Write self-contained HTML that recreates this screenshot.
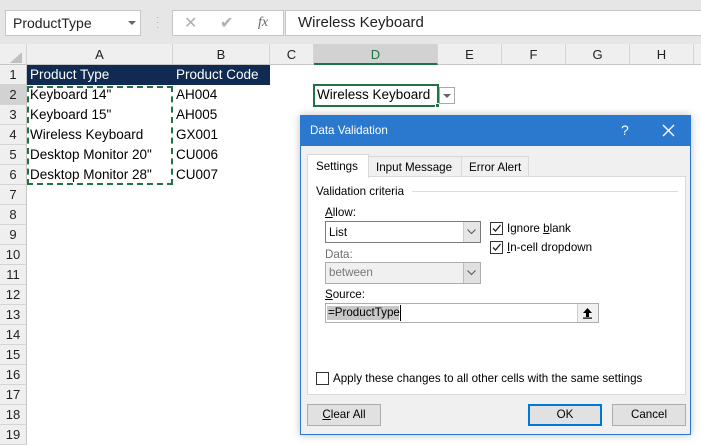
<!DOCTYPE html>
<html><head><meta charset="utf-8"><style>
*{margin:0;padding:0;box-sizing:border-box}
body{width:701px;height:443px;overflow:hidden;background:#fff;font-family:"Liberation Sans",sans-serif;position:relative}
.a{position:absolute}
.ch{position:absolute;top:44px;height:21px;background:#efefef;border-right:1px solid #d4d4d4;border-bottom:1px solid #c6c6c6;text-align:center;font-size:13px;line-height:21px;color:#222}
.rh{position:absolute;left:0;width:27px;height:20px;background:#efefef;border-bottom:1px solid #d4d4d4;border-right:1px solid #c6c6c6;text-align:center;font-size:13px;line-height:20px;color:#222}
.c{position:absolute;font-size:13.5px;line-height:20px;color:#000;white-space:nowrap}
.d{font-size:11.6px;color:#000;white-space:nowrap}
.btn{position:absolute;height:22px;background:#e1e1e1;border:1px solid #adadad;font-size:11.6px;text-align:center;line-height:20px}
.cb{position:absolute;width:13px;height:13px;border:1px solid #333;background:#fff}
</style></head><body>
<div class="a" style="left:0;top:0;width:701px;height:44px;background:#e6e6e6"></div>
<div class="a" style="left:5px;top:10px;width:136px;height:26px;background:#fff;border:1px solid #c6c6c6;font-size:14px;line-height:24px;padding-left:7px;color:#222">ProductType</div>
<div class="a" style="left:128px;top:21px;border-left:4px solid transparent;border-right:4px solid transparent;border-top:4px solid #666"></div>
<div class="a" style="left:156px;top:15px;color:#aaa;font-size:10px;line-height:5px">·<br>·<br>·</div>
<div class="a" style="left:172px;top:10px;width:112px;height:26px;background:#fff;border:1px solid #c6c6c6"></div>
<div class="a" style="left:184px;top:13px;color:#b0b0b0;font-size:16px">✕</div>
<div class="a" style="left:220px;top:13px;color:#b0b0b0;font-size:16px">✔</div>
<div class="a" style="left:258px;top:15px;color:#666;font-size:14px;font-style:italic;font-family:'Liberation Serif',serif">fx</div>
<div class="a" style="left:285px;top:10px;width:420px;height:26px;background:#fff;border:1px solid #c6c6c6;font-size:15px;line-height:24px;padding-left:12px;color:#222">Wireless Keyboard</div>

<div class="ch" style="left:0;width:27px"></div>
<div class="a" style="left:10px;top:52px;border-left:12px solid transparent;border-bottom:11px solid #c0c0c0"></div>
<div class="ch" style="left:27px;width:146px">A</div>
<div class="ch" style="left:173px;width:97px">B</div>
<div class="ch" style="left:270px;width:44px">C</div>
<div class="ch" style="left:314px;width:124px;background:#d2d2d2;border-bottom:2px solid #217346;color:#217346">D</div>
<div class="ch" style="left:438px;width:64px">E</div>
<div class="ch" style="left:502px;width:64px">F</div>
<div class="ch" style="left:566px;width:64px">G</div>
<div class="ch" style="left:630px;width:64px">H</div>
<div class="ch" style="left:694px;width:10px"></div>

<div class="rh" style="top:65px">1</div><div class="rh" style="top:85px;background:#d2d2d2">2</div><div class="rh" style="top:105px">3</div><div class="rh" style="top:125px">4</div><div class="rh" style="top:145px">5</div><div class="rh" style="top:165px">6</div><div class="rh" style="top:185px">7</div><div class="rh" style="top:205px">8</div><div class="rh" style="top:225px">9</div><div class="rh" style="top:245px">10</div><div class="rh" style="top:265px">11</div><div class="rh" style="top:285px">12</div><div class="rh" style="top:305px">13</div><div class="rh" style="top:325px">14</div><div class="rh" style="top:345px">15</div><div class="rh" style="top:365px">16</div><div class="rh" style="top:385px">17</div><div class="rh" style="top:405px">18</div><div class="rh" style="top:425px">19</div>

<div class="a" style="left:27px;top:65px;width:243px;height:20px;background:#112a52"></div>
<div class="c" style="left:30px;top:65px;color:#fff">Product Type</div>
<div class="c" style="left:176px;top:65px;color:#fff">Product Code</div>
<div class="a" style="left:27px;top:86px;width:146px;height:99px;border:2px dashed #217346"></div>
<div class="c" style="left:30px;top:85px">Keyboard 14"</div><div class="c" style="left:176px;top:85px">AH004</div>
<div class="c" style="left:30px;top:105px">Keyboard 15"</div><div class="c" style="left:176px;top:105px">AH005</div>
<div class="c" style="left:30px;top:125px">Wireless Keyboard</div><div class="c" style="left:176px;top:125px">GX001</div>
<div class="c" style="left:30px;top:145px">Desktop Monitor 20"</div><div class="c" style="left:176px;top:145px">CU006</div>
<div class="c" style="left:30px;top:165px">Desktop Monitor 28"</div><div class="c" style="left:176px;top:165px">CU007</div>

<div class="a" style="left:313px;top:84px;width:126px;height:23px;border:2px solid #217346"></div>
<div class="c" style="left:317px;top:85px">Wireless Keyboard</div>
<div class="a" style="left:435px;top:103px;width:5px;height:5px;background:#217346;border:1px solid #fff"></div>
<div class="a" style="left:439px;top:87px;width:16px;height:17px;border:1px solid #aaa;background:#fff"></div>
<div class="a" style="left:443px;top:94px;border-left:4px solid transparent;border-right:4px solid transparent;border-top:4px solid #666"></div>

<!-- dialog -->
<div class="a" style="left:300px;top:115px;width:391px;height:320px;background:#f0f0f0;border:1px solid #2b79cf;box-shadow:0 0 8px rgba(0,0,0,.25)"></div>
<div class="a" style="left:300px;top:115px;width:391px;height:31px;background:#2b79cf"></div>
<div class="a d" style="left:310px;top:124px;color:#fff">Data Validation</div>
<div class="a" style="left:621px;top:122px;color:#fff;font-size:14px">?</div>
<svg class="a" style="left:662px;top:124px" width="13" height="13"><path d="M1 1L12 12M12 1L1 12" stroke="#fff" stroke-width="1.4"/></svg>

<div class="a" style="left:307px;top:176px;width:379px;height:219px;background:#fff;border:1px solid #d9d9d9"></div>
<div class="a" style="left:368px;top:156px;width:94px;height:21px;background:#f0f0f0;border:1px solid #d9d9d9"></div>
<div class="a d" style="left:376px;top:161px">Input Message</div>
<div class="a" style="left:461px;top:156px;width:68px;height:21px;background:#f0f0f0;border:1px solid #d9d9d9"></div>
<div class="a d" style="left:469px;top:161px">Error Alert</div>
<div class="a" style="left:307px;top:154px;width:62px;height:24px;background:#fff;border:1px solid #d9d9d9;border-bottom:none"></div>
<div class="a d" style="left:316px;top:160px">Settings</div>

<div class="a d" style="left:316px;top:185px">Validation criteria</div>
<div class="a" style="left:412px;top:191px;width:266px;height:1px;background:#dcdcdc"></div>
<div class="a d" style="left:325px;top:206px"><u>A</u>llow:</div>
<div class="a" style="left:325px;top:221px;width:156px;height:22px;border:1px solid #7a7a7a;background:#fff"></div>
<div class="a d" style="left:329px;top:226px">List</div>
<div class="a" style="left:463px;top:222px;width:17px;height:20px;background:#e6e6e6;border-left:1px solid #ccc"></div>
<svg class="a" style="left:467px;top:229px" width="9" height="6"><path d="M0.5 0.5L4.5 4.5L8.5 0.5" stroke="#555" fill="none"/></svg>
<div class="a d" style="left:325px;top:248px;color:#6d6d6d">Data:</div>
<div class="a" style="left:325px;top:262px;width:156px;height:22px;border:1px solid #adadad;background:#f0f0f0"></div>
<div class="a d" style="left:329px;top:266px;color:#777">between</div>
<div class="a" style="left:463px;top:263px;width:17px;height:20px;background:#e0e0e0;border-left:1px solid #bbb"></div>
<svg class="a" style="left:467px;top:270px" width="9" height="6"><path d="M0.5 0.5L4.5 4.5L8.5 0.5" stroke="#555" fill="none"/></svg>

<div class="cb" style="left:490px;top:222px"><svg width="11" height="11" style="display:block"><path d="M2 5.5L4.5 8L9.5 2" stroke="#222" stroke-width="1.3" fill="none"/></svg></div>
<div class="a d" style="left:507px;top:222px">Ignore <u>b</u>lank</div>
<div class="cb" style="left:490px;top:241px"><svg width="11" height="11" style="display:block"><path d="M2 5.5L4.5 8L9.5 2" stroke="#222" stroke-width="1.3" fill="none"/></svg></div>
<div class="a d" style="left:507px;top:241px"><u>I</u>n-cell dropdown</div>

<div class="a d" style="left:325px;top:288px"><u>S</u>ource:</div>
<div class="a" style="left:325px;top:303px;width:274px;height:20px;border:1px solid #adadad;background:#fff"></div>
<div class="a" style="left:327px;top:306px;width:72px;height:14px;background:#c8c8c8"></div>
<div class="a d" style="left:328px;top:306px">=ProductType</div>
<div class="a" style="left:400px;top:305px;width:1px;height:16px;background:#000"></div>
<div class="a" style="left:577px;top:304px;width:21px;height:18px;background:#f0f0f0;border-left:1px solid #ccc"></div>
<svg class="a" style="left:582px;top:307px" width="11" height="12"><path d="M5.5 1L10 6H7V10H4V6H1Z" fill="#000"/><rect x="1" y="10.5" width="9" height="1.2" fill="#000"/></svg>

<div class="cb" style="left:316px;top:372px"></div>
<div class="a d" style="left:333px;top:372px">Apply these changes to all other cells with the same settings</div>

<div class="btn" style="left:307px;top:404px;width:74px"><u>C</u>lear All</div>
<div class="btn" style="left:528px;top:404px;width:74px;border:2px solid #0078d7;line-height:18px">OK</div>
<div class="btn" style="left:612px;top:404px;width:74px">Cancel</div>
</body></html>
